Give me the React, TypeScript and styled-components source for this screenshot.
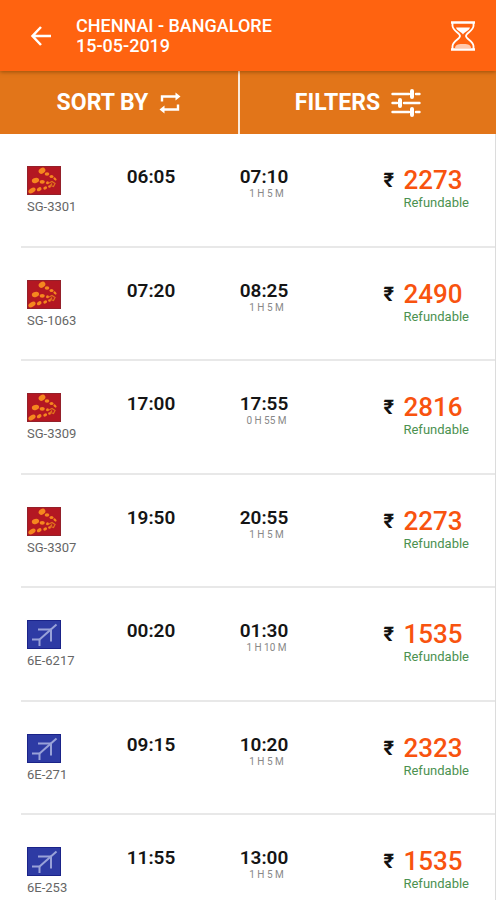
import React from "react";
import styled, { createGlobalStyle } from "styled-components";

const GlobalStyle = createGlobalStyle`
  * { box-sizing: border-box; }
  body { margin: 0; background: #fff; font-family: Roboto, "Noto Sans", sans-serif; }
  button { font: inherit; color: inherit; background: none; border: 0; padding: 0; cursor: pointer; }
`;

const Screen = styled.main`
  display: flex;
  flex-direction: column;
  height: 100vh;
`;

const AppBar = styled.header`
  position: relative;
  display: flex;
  align-items: center;
  flex: none;
  height: 71px;
  padding: 0 20px 0 29px;
  background: #ff6310;
  color: #fff;
  box-shadow: 0 1px 4px rgba(90, 50, 0, 0.55);
`;

const IconButton = styled.button`
  display: flex;
  flex: none;
`;

const Heading = styled.h1`
  flex: 1;
  margin: 0 0 0 23px;
  font-size: 18px;
  line-height: 20px;
  font-weight: 500;
`;

const Actions = styled.nav`
  display: grid;
  grid-template-columns: 238fr 258fr;
  flex: none;
  height: 63px;
  background: #e27519;
  color: #fff;
`;

const ActionButton = styled.button`
  display: flex;
  align-items: center;
  justify-content: center;
  gap: 11px;
  font-size: 23px;
  line-height: 28px;
  font-weight: 700;

  & + & {
    padding-right: 20px;
    border-left: 2px solid #fbeadb;
  }
`;

const FlightList = styled.ul`
  flex: 1;
  min-height: 0;
  margin: 0;
  padding: 0 0 0 21px;
  list-style: none;
  overflow-y: auto;
  scrollbar-width: none;
  border-right: 1px solid #dcdcdc;
`;

const FlightRow = styled.li`
  display: grid;
  grid-template-columns: 76fr 108fr 118fr 172fr;
  height: 114px;
  border-bottom: 2px solid #e8e8e8;

  &:nth-child(even) {
    height: 113px;
  }
`;

const Carrier = styled.div`
  display: flex;
  flex-direction: column;
  align-items: flex-start;
  gap: 4px;
  padding: 32px 0 0 6px;
`;

const FlightCode = styled.span`
  font-size: 13px;
  line-height: 16px;
  color: #666;
  white-space: nowrap;
`;

const TimeColumn = styled.div`
  display: flex;
  flex-direction: column;
  align-items: center;
  padding-top: 32px;
`;

const Time = styled.time`
  font-size: 19px;
  line-height: 22px;
  font-weight: 600;
  color: #151515;
`;

const Duration = styled.span`
  padding-left: 5px;
  font-size: 10px;
  line-height: 12px;
  color: #888;
`;

const Fare = styled.div`
  display: grid;
  grid-template-columns: 20px auto;
  justify-content: end;
  align-content: start;
  padding: 31px 26px 0 0;
`;

const Currency = styled.span`
  font-size: 20px;
  line-height: 30px;
  font-weight: 700;
  color: #111;
`;

const Amount = styled.span`
  font-size: 26px;
  line-height: 30px;
  font-weight: 500;
  color: #f8530f;
`;

const Refund = styled.span`
  grid-column: 2;
  font-size: 13px;
  line-height: 16px;
  color: #4b9150;
`;

const BackIcon = () => (
  <svg width="24" height="22" viewBox="0 0 24 22" fill="none" stroke="#fff" strokeWidth="2.5">
    <path d="M22 11H4M12 2L3.5 11L12 20" />
  </svg>
);

const HourglassIcon = () => (
  <svg width="26" height="30" viewBox="0 0 26 30" fill="none" stroke="#fff" strokeWidth="1.8">
    <path d="M1 1.5H25M1 28.5H25" strokeWidth="2.6" />
    <path d="M2.500 2V5C3 10 10 12 10 15C10 18 3 20 2.500 25V28M23.500 2V5C23 10 16 12 16 15C16 18 23 20 23.500 25V28" />
    <path d="M6 6.500H20C19 10 14.500 10.500 13 13.500C11.500 10.500 7 10 6 6.500Z" fill="#fff" stroke="none" />
    <path d="M5 27C5 23 10 23 13 23S21 23 21 27Z" fill="#ffc9ad" stroke="none" />
  </svg>
);

const RepeatIcon = () => (
  <svg width="22" height="22" viewBox="0 0 22 22" fill="none" stroke="#fff" strokeWidth="2.4">
    <path d="M3 9.500V4.500H17M19 12.500V17.500H5" />
    <path d="M16.500 0.500L21.500 4.500L16.500 8.500ZM5.500 13.500L0.500 17.500L5.500 21.500Z" fill="#fff" stroke="none" />
  </svg>
);

const TuneIcon = () => (
  <svg width="30" height="28" viewBox="0 0 30 28" fill="none" stroke="#fff" strokeLinecap="round">
    <path d="M1.500 5H18M25 5H28.500M1.500 14H6M13 14H28.500M1.500 23H18M25 23H28.500" strokeWidth="2.4" />
    <path d="M21 2V8M9 11V17M21 20V26" strokeWidth="4" />
  </svg>
);

const SpiceLogo = () => (
  <svg width="34" height="29" viewBox="0 0 34 29" role="img" aria-label="SpiceJet">
    <rect width="34" height="29" fill="#b31722" />
    <rect x="0.500" y="0.500" width="33" height="28" fill="none" stroke="#94202a" />
    <g fill="#f5871f">
      <ellipse cx="15" cy="4.800" rx="3.600" ry="2.700" transform="rotate(-35 15 4.800)" />
      <ellipse cx="20" cy="8" rx="2.300" ry="1.800" />
      <ellipse cx="24.500" cy="10.500" rx="2" ry="1.500" />
      <ellipse cx="28" cy="13" rx="1.900" ry="1.200" transform="rotate(45 28 13)" />
      <ellipse cx="8.500" cy="14.500" rx="3.700" ry="2.500" transform="rotate(-15 8.500 14.500)" />
      <ellipse cx="15.200" cy="15.800" rx="2.600" ry="1.900" />
      <ellipse cx="5" cy="24.500" rx="3.900" ry="2.300" transform="rotate(-30 5 24.500)" />
      <ellipse cx="12.200" cy="23.200" rx="2.500" ry="1.800" transform="rotate(-30 12.200 23.200)" />
      <ellipse cx="18.200" cy="22" rx="2" ry="1.500" transform="rotate(-30 18.200 22)" />
      <circle cx="20.500" cy="16.800" r="1.500" />
      <circle cx="22.500" cy="20.500" r="1.300" />
    </g>
    <path d="M22 17L25 15.500L28 17.500L26.500 20.500L23.500 19.500L25 17.500" fill="none" stroke="#e0721d" strokeWidth="1.300" />
  </svg>
);

const IndigoLogo = () => (
  <svg width="34" height="29" viewBox="0 0 34 29" role="img" aria-label="IndiGo">
    <rect width="34" height="29" fill="#2e3ba4" />
    <rect x="0.500" y="0.500" width="33" height="28" fill="none" stroke="#1a2389" />
    <g fill="none" stroke="#99a2d8" strokeWidth="2">
      <path d="M29.500 4.500L12 20" />
      <path d="M11 9.500H24M24 9.500V21.500M5 19.500H12.500M12.500 19.500V26" />
    </g>
  </svg>
);

interface Flight {
  carrier: "spice" | "indigo";
  code: string;
  departs: string;
  arrives: string;
  duration: string;
  fare: number;
}

const flights: Flight[] = [
  { carrier: "spice", code: "SG-3301", departs: "06:05", arrives: "07:10", duration: "1 H 5 M", fare: 2273 },
  { carrier: "spice", code: "SG-1063", departs: "07:20", arrives: "08:25", duration: "1 H 5 M", fare: 2490 },
  { carrier: "spice", code: "SG-3309", departs: "17:00", arrives: "17:55", duration: "0 H 55 M", fare: 2816 },
  { carrier: "spice", code: "SG-3307", departs: "19:50", arrives: "20:55", duration: "1 H 5 M", fare: 2273 },
  { carrier: "indigo", code: "6E-6217", departs: "00:20", arrives: "01:30", duration: "1 H 10 M", fare: 1535 },
  { carrier: "indigo", code: "6E-271", departs: "09:15", arrives: "10:20", duration: "1 H 5 M", fare: 2323 },
  { carrier: "indigo", code: "6E-253", departs: "11:55", arrives: "13:00", duration: "1 H 5 M", fare: 1535 },
];

export default function App() {
  return (
    <>
      <GlobalStyle />
      <Screen>
        <AppBar>
          <IconButton aria-label="Back"><BackIcon /></IconButton>
          <Heading>CHENNAI - BANGALORE<br />15-05-2019</Heading>
          <IconButton aria-label="Session time"><HourglassIcon /></IconButton>
        </AppBar>
        <Actions>
          <ActionButton>SORT BY <RepeatIcon /></ActionButton>
          <ActionButton>FILTERS <TuneIcon /></ActionButton>
        </Actions>
        <FlightList>
          {flights.map((f) => (
            <FlightRow key={f.code}>
              <Carrier>
                {f.carrier === "spice" ? <SpiceLogo /> : <IndigoLogo />}
                <FlightCode>{f.code}</FlightCode>
              </Carrier>
              <TimeColumn><Time>{f.departs}</Time></TimeColumn>
              <TimeColumn>
                <Time>{f.arrives}</Time>
                <Duration>{f.duration}</Duration>
              </TimeColumn>
              <Fare>
                <Currency>₹</Currency>
                <Amount>{f.fare}</Amount>
                <Refund>Refundable</Refund>
              </Fare>
            </FlightRow>
          ))}
        </FlightList>
      </Screen>
    </>
  );
}
